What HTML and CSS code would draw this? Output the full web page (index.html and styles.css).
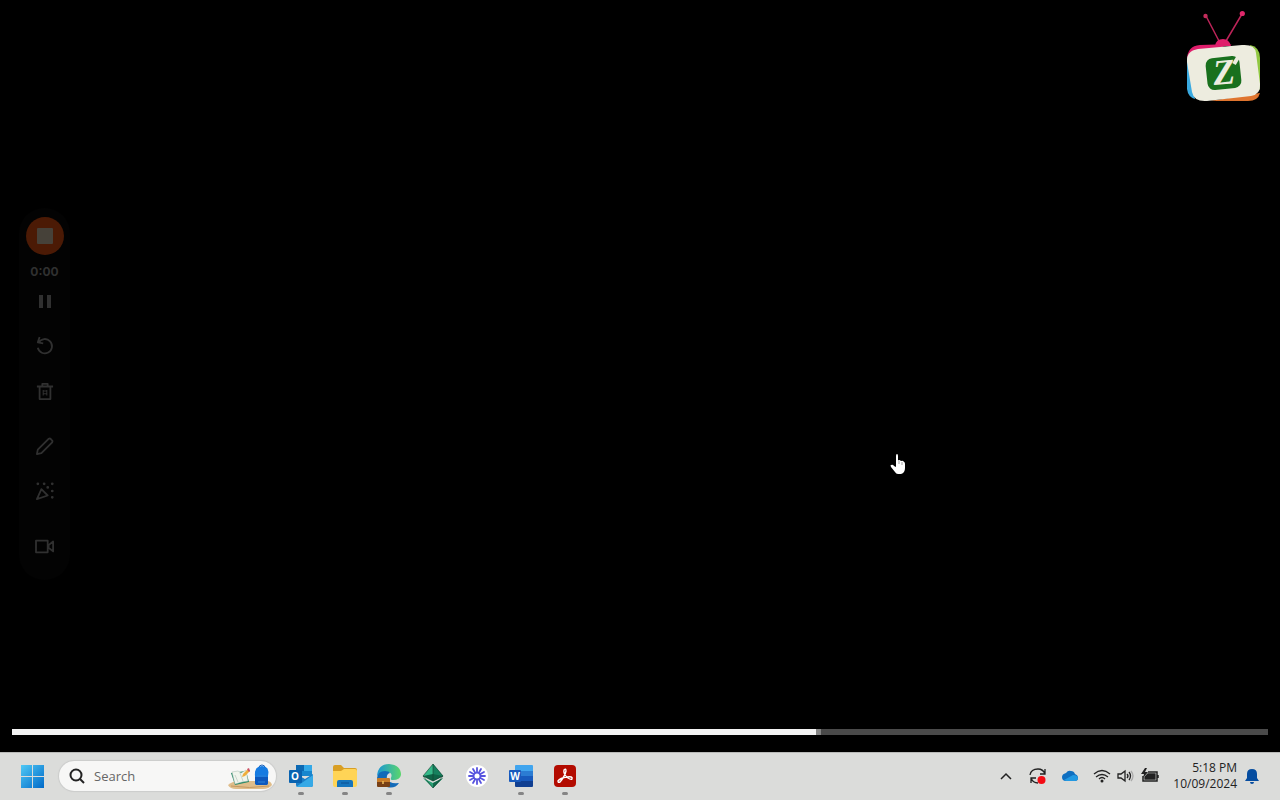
FILE: index.html
```
<!DOCTYPE html>
<html lang="en">
<head>
    <meta charset="UTF-8">
    <meta name="viewport" content="width=device-width, initial-scale=1.0">
    <title>Screen recording</title>
    <link rel="stylesheet" href="styles.css">
</head>
<body>
    <main class="stage">
        <svg class="tv-logo" viewBox="1180 8 88 100" role="img" aria-label="Z TV">
            <path d="M1206 16L1219 41M1242 14L1226 41" stroke="#bd2459" stroke-width="1.5"/>
            <circle cx="1205.500" cy="16" r="2.200" fill="#c52d5c"/>
            <circle cx="1242.300" cy="13.500" r="2.600" fill="#df286b"/>
            <path d="M1215 46q1-7 8-7q6 0 8 7z" fill="#df1d6b"/>
            <path d="M1187 60q0-14 13-15l32-1l-40 12z" fill="#df1d6b"/>
            <path d="M1187 56l8 43q-7-2-8-10z" fill="#39a9e0"/>
            <path d="M1250 45q10 2 10 13v33z" fill="#91c842"/>
            <path d="M1210 101l50-8q-2 8-12 8z" fill="#df742e"/>
            <path d="M1198 49l44-4q13-1 14 8l4 31q1 10-9 12l-44 5q-13 1-15-9l-5-30q-1-11 11-13z" fill="#edecdf"/>
            <rect x="1206.500" y="57" width="34" height="32" rx="7" transform="rotate(-6 1224 73)" fill="#19701d"/>
            <path d="M1234 64L1240 54" stroke="#edecdf" stroke-width="4"/>
            <text x="1224" y="84" class="tv-letter" transform="rotate(-5 1224 73)">Z</text>
        </svg>

        <div class="recorder">
            <button class="stop" aria-label="Stop recording"><span></span></button>
            <time class="elapsed">0:00</time>
            <button class="tool pause" aria-label="Pause">
                <svg viewBox="0 0 20 20"><path d="M6 4v13M14 4v13" stroke-width="4"/></svg>
            </button>
            <button class="tool" aria-label="Restart">
                <svg viewBox="0 0 20 20"><path d="M4 0L2 6l6 1M3 6a8 8 0 1 1-1 6"/></svg>
            </button>
            <button class="tool" aria-label="Delete">
                <svg viewBox="0 0 20 20"><path d="M1 5h18M7 5V2h6v3M4 5v14h12V5"/><path d="M8 9v6M12 9v6M8 10h4M8 13h4" stroke-width="1.200"/></svg>
            </button>
            <button class="tool group" aria-label="Draw">
                <svg viewBox="0 0 20 20"><path d="M1 19l1-5L14 2q2-1 3 1q2 1 1 3L6 18z"/></svg>
            </button>
            <button class="tool" aria-label="Effects">
                <svg viewBox="0 0 20 20"><path d="M6 8L1 19l12-4zM6 8l7 7"/><path class="dots" d="M2 2h.1M9 2h.1M18 2h.1M13 6h.1M18 10h.1M18 17h.1"/></svg>
            </button>
            <button class="tool group" aria-label="Camera">
                <svg viewBox="0 0 20 20"><path d="M0 4h13v13H0zM14 9l5-4v11l-5-4z"/></svg>
            </button>
        </div>

        <svg class="pointer" viewBox="888 452 20 24" aria-hidden="true">
            <path d="M896 456q0-2 1-2t1 2v5q0-1 1-1t2 1q2-1 3 1q1 0 1 2v4q0 5-4 6h-3q-2 0-3-2l-4-5q-1-2 0-2q2-1 3 1l2 1z" fill="#fff"/>
            <path d="M899 461v3M902 462v3" stroke="#777" stroke-width=".7"/>
        </svg>

        <input class="progress" type="range" min="0" max="1000" value="643" style="--played: 64.3%" aria-label="Playback position">
    </main>

    <footer class="taskbar">
        <button class="start" aria-label="Start">
            <svg viewBox="0 0 24 24">
                <defs>
                    <linearGradient id="win" x1="0" y1="0" x2="24" y2="24" gradientUnits="userSpaceOnUse">
                        <stop stop-color="#53cdf7"/>
                        <stop offset="1" stop-color="#0069c8"/>
                    </linearGradient>
                </defs>
                <path d="M1 1h11v11H1zM13 1h11v11H13zM1 13h11v11H1zM13 13h11v11H13z" fill="url(#win)"/>
            </svg>
        </button>
        <label class="search">
            <svg class="search-icon" viewBox="0 0 16 16"><circle cx="7" cy="7" r="5.500"/><path d="M11 11l4 4"/></svg>
            <input type="text" placeholder="Search" aria-label="Search">
            <svg class="search-art" viewBox="227 762 46 28" aria-hidden="true">
                <path d="M228 785q5-4 10-4h29q4 0 5 4q-3 4-9 4h-27q-6 0-8-4z" fill="#dfbd8a"/>
                <path d="M231 786q18 3 38 0" stroke="#c59961" fill="none"/>
                <path d="M231 773l15-2 3 11-14 3z" fill="#248967"/>
                <path d="M232 772l6-1 3 2 5-3 2 11-6 1-7 2z" fill="#f1f5ed" stroke="#a8bcb0" stroke-width=".5"/>
                <path d="M235 775l3 7M240 773l3 8" stroke="#b6c5bd" stroke-width=".7"/>
                <path d="M242 777l1-3 5-5 2 2-5 5z" fill="#efae3b"/>
                <path d="M247 769l2-1 1 3-1 1z" fill="#cc506a"/>
                <path d="M259 768q0-3 3-3t3 3" stroke="#1c62ba" fill="none"/>
                <path d="M255 776q-1-10 7-10t6 10v7q0 2-3 2h-7q-3 0-3-2z" fill="#167be1"/>
                <path d="M255 777h13v6q0 2-3 2h-7q-3 0-3-2z" fill="#0d58bd"/>
                <path d="M257 776h9M258 782h7" stroke="#2c83d8"/>
            </svg>
        </label>

        <nav class="apps" aria-label="Pinned apps">
            <button class="app running" aria-label="Outlook">
                <svg viewBox="0 0 24 24">
                    <path d="M7 1h16v11H7z" fill="#1786ce"/>
                    <path d="M7 1h8v6H7z" fill="#0c69b3"/>
                    <path d="M15 1h8v6h-8z" fill="#33a9e8"/>
                    <path d="M7 10l9 5 8-5v11q0 2-2 2H9q-2 0-2-2z" fill="#1a7ec8"/>
                    <path d="M7 23l17-12v10q0 2-2 2z" fill="#36a9e6"/>
                    <rect y="6" width="13" height="13" rx="1" fill="#0963b0"/>
                    <text x="6" y="16" class="app-letter">O</text>
                </svg>
            </button>
            <button class="app running" aria-label="File Explorer">
                <svg viewBox="0 0 24 24">
                    <path d="M0 3q0-2 2-2h6l3 3h11q2 0 2 2v4H0z" fill="#d99f24"/>
                    <path d="M0 7h8l3-2h11q2 0 2 2v14q0 2-2 2H2q-2 0-2-2z" fill="#ffd456"/>
                    <path d="M4 23v-5q0-2 2-2h12q2 0 2 2v5z" fill="#1675bd"/>
                    <path d="M8 19h8" stroke="#0c5191"/>
                </svg>
            </button>
            <button class="app running" aria-label="Edge">
                <svg viewBox="0 0 24 24">
                    <defs>
                        <linearGradient id="wave" x2="1" y2="0">
                            <stop stop-color="#1a96d4"/>
                            <stop offset="1" stop-color="#5bd66c"/>
                        </linearGradient>
                    </defs>
                    <path d="M0 12Q1 0 12 0q12 1 12 11q-1 5-8 5q-3 0-2-2q2-5-3-6Q5 7 0 12z" fill="url(#wave)"/>
                    <path d="M0 14q1-7 8-7q4 0 5 2q-4 1-3 6q2 5 12 4q-4 6-12 4Q0 21 0 14z" fill="#126ab8"/>
                    <path d="M0 15q0-1 1-1h11q1 0 1 1v4H0z" fill="#c87c28"/>
                    <path d="M0 18h13v4q0 1-1 1H1q-1 0-1-1z" fill="#784015"/>
                    <path d="M6 17v3" stroke="#f0bd58" stroke-width="1.500"/>
                </svg>
            </button>
            <button class="app" aria-label="Green diamond">
                <svg viewBox="0 0 24 24">
                    <path d="M12 0L2 12l10 5 10-5z" fill="#35b989"/>
                    <path d="M12 0v17l10-5z" fill="#16815e"/>
                    <path d="M12 10L2 12l10 5 10-5z" fill="#0e6447"/>
                    <path d="M2 14l10 5 10-5-10 10z" fill="#2aa075"/>
                    <path d="M12 19v5l10-10z" fill="#11694b"/>
                    <path d="M12 0L2 12l10 12 10-12zM2 12l10 5 10-5M12 0v17" fill="none" stroke="#143f31" stroke-width=".6"/>
                </svg>
            </button>
            <button class="app" aria-label="Loom">
                <svg viewBox="0 0 24 24">
                    <circle cx="12" cy="12" r="11" fill="#fff"/>
                    <path d="M12 4v16M4 12h16M8 5l8 14M16 5L8 19M5 8l14 8M19 8L5 16" stroke="#5753df" stroke-width="1.800" stroke-linecap="round"/>
                    <circle cx="12" cy="12" r="4" fill="#5753df"/>
                    <circle cx="12" cy="12" r="2.500" fill="#fff"/>
                </svg>
            </button>
            <button class="app running" aria-label="Word">
                <svg viewBox="0 0 24 24">
                    <path d="M6 2q0-1 1-1h16q1 0 1 1v6H6z" fill="#41a5ee"/>
                    <path d="M6 7h18v5H6z" fill="#2b7cd3"/>
                    <path d="M6 12h18v6H6z" fill="#185abd"/>
                    <path d="M6 17h18v5q0 1-1 1H7q-1 0-1-1z" fill="#103f91"/>
                    <rect y="6" width="12" height="12" rx="1" fill="#185abd"/>
                    <text x="6" y="16" class="app-letter">W</text>
                </svg>
            </button>
            <button class="app running" aria-label="Acrobat">
                <svg viewBox="0 0 24 24">
                    <rect x="1" y="1" width="22" height="22" rx="4" fill="#b30b00"/>
                    <path d="M11 6q2-2 2 1q-1 5-6 11q-2 1-2-1q2-3 9-4q6-1 5 2q-1 1-4-1q-5-4-4-8z" fill="none" stroke="#fff" stroke-width="1.400"/>
                </svg>
            </button>
        </nav>

        <div class="tray">
            <button class="tray-button" aria-label="Show hidden icons">
                <svg viewBox="0 0 20 20"><path d="M5 13l5-5 5 5" stroke-width="1.500"/></svg>
            </button>
            <button class="tray-button" aria-label="Sync">
                <svg viewBox="0 0 20 20">
                    <path d="M2 9q1-6 8-6q5 0 7 5M17 3v5h-5M3 17v-5h5M3 12q2 5 7 5"/>
                    <circle cx="13.500" cy="14" r="4" fill="#f40c14" stroke="none"/>
                </svg>
            </button>
            <button class="tray-button" aria-label="OneDrive">
                <svg viewBox="0 0 20 20">
                    <path d="M6 15q-4 0-4-4q0-3 4-4q2-3 5-2q3 0 4 3q3 1 3 4q0 3-3 3z" fill="#0f6fc0" stroke="none"/>
                    <path d="M4 14l9-5q5 0 5 4q-1 2-3 2H6z" fill="#2299e2" stroke="none"/>
                </svg>
            </button>
            <button class="status" aria-label="Network, volume and battery">
                <svg viewBox="0 0 20 20"><path d="M2 8q8-7 16 0M4 11q6-5 12 0M7 13q3-3 6 0"/><circle cx="10" cy="15" r="1.500" fill="#222" stroke="none"/></svg>
                <svg viewBox="0 0 20 20"><path d="M2 8h3l4-3v10l-4-3H2zM11 8q2 2 0 4M13 6q3 4 0 8"/><path d="M15 5q4 5 0 10" stroke="#aaa"/></svg>
                <svg viewBox="0 0 20 20"><path d="M8 6h9v9H3v-5M18 9v3" stroke-width="1.500"/><path d="M8 8h7v5H5v-2z" fill="#222"/><path d="M5 2L1 8h3l-1 4 5-6H5l2-4z" fill="#222" stroke="none"/></svg>
            </button>
            <button class="clock"><span>5:18 PM</span><span>10/09/2024</span></button>
            <button class="bell" aria-label="Notifications">
                <svg viewBox="0 0 16 16"><path d="M3 10V6q0-5 5-5t5 5v4l2 3H1zM6 14h4q0 2-2 2t-2-2z" fill="#064da0"/></svg>
            </button>
        </div>
    </footer>
</body>
</html>
```
FILE: styles.css
```
* {
    margin: 0;
    padding: 0;
    box-sizing: border-box;
}

body {
    min-height: 100vh;
    display: flex;
    flex-direction: column;
    background-color: #000;
    font-family: "Open Sans", "Noto Sans", sans-serif;
}

button {
    border: none;
    background: none;
    color: inherit;
    font: inherit;
    cursor: pointer;
}

svg {
    display: block;
    flex-shrink: 0;
}

/* recorded screen */
.stage {
    flex: 1;
    position: relative;
    display: flex;
    align-items: flex-end;
    padding: 0 12px 17px;
}

.tv-logo {
    position: absolute;
    top: 8px;
    right: 12px;
    width: 88px;
    height: 100px;
    fill: none;
}

.tv-letter {
    fill: #edecdf;
    font: italic bold 36px "Liberation Serif", serif;
    text-anchor: middle;
}

.recorder {
    position: absolute;
    top: 208px;
    left: 19px;
    width: 51px;
    padding: 9px 0 24px;
    display: flex;
    flex-direction: column;
    align-items: center;
    border-radius: 25px;
    background-color: #030303;
    color: #303030;
}

.stop {
    width: 38px;
    height: 38px;
    display: flex;
    align-items: center;
    justify-content: center;
    border-radius: 50%;
    background-color: #4b1a05;
}

.stop span {
    width: 16px;
    height: 16px;
    border-radius: 1px;
    background-color: #464139;
}

.elapsed {
    margin-top: 8px;
    font: bold 12px/18px Inter, sans-serif;
}

.tool {
    height: 20px;
    margin-top: 25px;
    display: flex;
    align-items: center;
}

.tool svg {
    width: 18px;
    height: 18px;
    overflow: visible;
    fill: none;
    stroke: #303030;
    stroke-width: 2;
    stroke-linejoin: round;
}

.tool .dots {
    stroke-width: 3;
    stroke-linecap: round;
}

.pause {
    margin-top: 10px;
}

.pause svg {
    width: 20px;
    height: 20px;
}

.group {
    margin-top: 35px;
}

.pointer {
    position: absolute;
    top: 452px;
    left: 888px;
    width: 20px;
    height: 24px;
}

.progress {
    appearance: none;
    width: 100%;
    height: 6px;
    background: linear-gradient(to right, #f3f3f3 var(--played), #4a4a4a var(--played));
}

.progress::-webkit-slider-thumb {
    appearance: none;
    width: 5px;
    height: 6px;
    background-color: #858585;
}

/* taskbar */
.taskbar {
    height: 48px;
    padding: 0 20px;
    display: flex;
    align-items: center;
    background-color: #dbdcda;
    box-shadow: inset 0 1px #b9bab8;
    color: #222;
}

.start svg {
    width: 24px;
    height: 24px;
}

.search {
    width: 217px;
    height: 30px;
    margin-left: 15px;
    padding: 0 3px 0 10px;
    display: flex;
    align-items: center;
    border-radius: 15px;
    background-color: #f7f7f6;
    box-shadow: 0 0 1px 1px #cbcccb;
}

.search-icon {
    width: 16px;
    height: 16px;
    fill: none;
    stroke: #222;
    stroke-width: 2;
}

.search input {
    flex: 1;
    min-width: 0;
    padding-left: 9px;
    border: none;
    outline: none;
    background: none;
    font: 13px/20px "Open Sans", sans-serif;
}

.search input::placeholder {
    color: #666;
}

.search-art {
    width: 46px;
    height: 28px;
}

.apps {
    display: flex;
    margin-left: 3px;
}

.app {
    position: relative;
    width: 44px;
    height: 44px;
    display: flex;
    align-items: center;
    justify-content: center;
}

.app svg {
    width: 24px;
    height: 24px;
}

.app-letter {
    fill: #fff;
    font: bold 10px "Open Sans", sans-serif;
    text-anchor: middle;
}

.running::after {
    content: "";
    position: absolute;
    bottom: 3px;
    left: 19px;
    width: 6px;
    height: 3px;
    border-radius: 2px;
    background-color: #858585;
}

.tray {
    display: flex;
    align-items: center;
    margin-left: auto;
}

.tray svg {
    width: 20px;
    height: 20px;
    fill: none;
    stroke: #222;
    stroke-width: 1.3;
}

.tray-button {
    width: 32px;
    display: flex;
    justify-content: center;
}

.status {
    display: flex;
    gap: 4px;
    margin-left: 6px;
}

.clock {
    display: flex;
    flex-direction: column;
    margin-left: 13px;
    text-align: right;
    font-size: 12px;
    line-height: 16px;
}

.tray .bell svg {
    width: 16px;
    height: 16px;
    stroke: none;
}

.bell {
    margin-left: 7px;
}
```
